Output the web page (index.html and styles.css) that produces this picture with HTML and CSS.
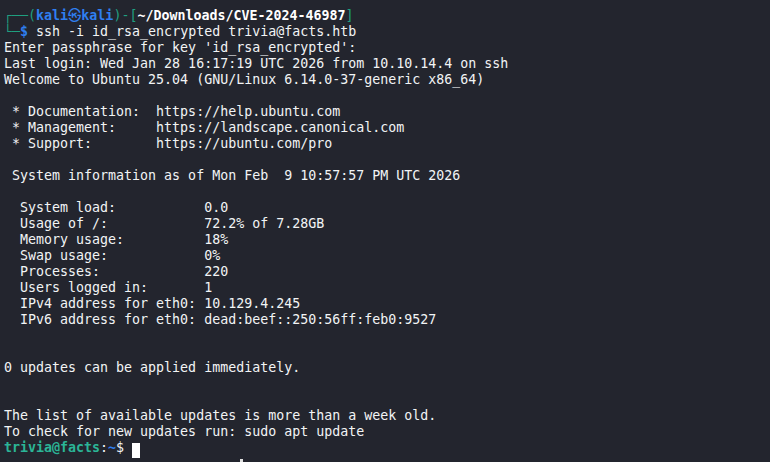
FILE: index.html
```html
<!DOCTYPE html>
<html>
<head>
<meta charset="utf-8">
<link rel="stylesheet" href="styles.css">
</head>
<body>
<pre class="term"><span class="g">┌──(</span><span class="b bold">kali㉿kali</span><span class="g">)-[</span><span class="bold w">~/Downloads/CVE-2024-46987</span><span class="g">]</span>
<span class="g">└─</span><span class="b bold">$</span> ssh -i id_rsa_encrypted trivia@facts.htb
Enter passphrase for key 'id_rsa_encrypted':
Last login: Wed Jan 28 16:17:19 UTC 2026 from 10.10.14.4 on ssh
Welcome to Ubuntu 25.04 (GNU/Linux 6.14.0-37-generic x86_64)

 * Documentation:  https://help.ubuntu.com
 * Management:     https://landscape.canonical.com
 * Support:        https://ubuntu.com/pro

 System information as of Mon Feb  9 10:57:57 PM UTC 2026

  System load:           0.0
  Usage of /:            72.2% of 7.28GB
  Memory usage:          18%
  Swap usage:            0%
  Processes:             220
  Users logged in:       1
  IPv4 address for eth0: 10.129.4.245
  IPv6 address for eth0: dead:beef::250:56ff:feb0:9527


0 updates can be applied immediately.


The list of available updates is more than a week old.
To check for new updates run: sudo apt update
<span class="t bold">trivia@facts</span>:<span class="b bold">~</span>$ <span class="cursor"> </span></pre>
<div class="mouse"></div>
</body>
</html>
```
FILE: styles.css
```css
html, body {
  margin: 0;
  padding: 0;
  background: #23252e;
  height: 100%;
  overflow: hidden;
}
.term {
  margin: 0;
  padding: 8px 0 0 4px;
  font-family: "DejaVu Sans Mono", "Noto Sans CJK JP", monospace;
  font-size: 13.3px;
  line-height: 16px;
  color: #f2f4f5;
}
.bold { font-weight: bold; }
.g { color: #1f9f80; }
.b { color: #2f7ff0; }
.w { color: #ffffff; }
.t { color: #2bb597; }
.cursor {
  display: inline-block;
  width: 8px;
  height: 15px;
  background: #ffffff;
  vertical-align: -3px;
}
.mouse {
  position: absolute;
  left: 240px;
  top: 459px;
  width: 3px;
  height: 3px;
  background: #e0e0e0;
}
```
